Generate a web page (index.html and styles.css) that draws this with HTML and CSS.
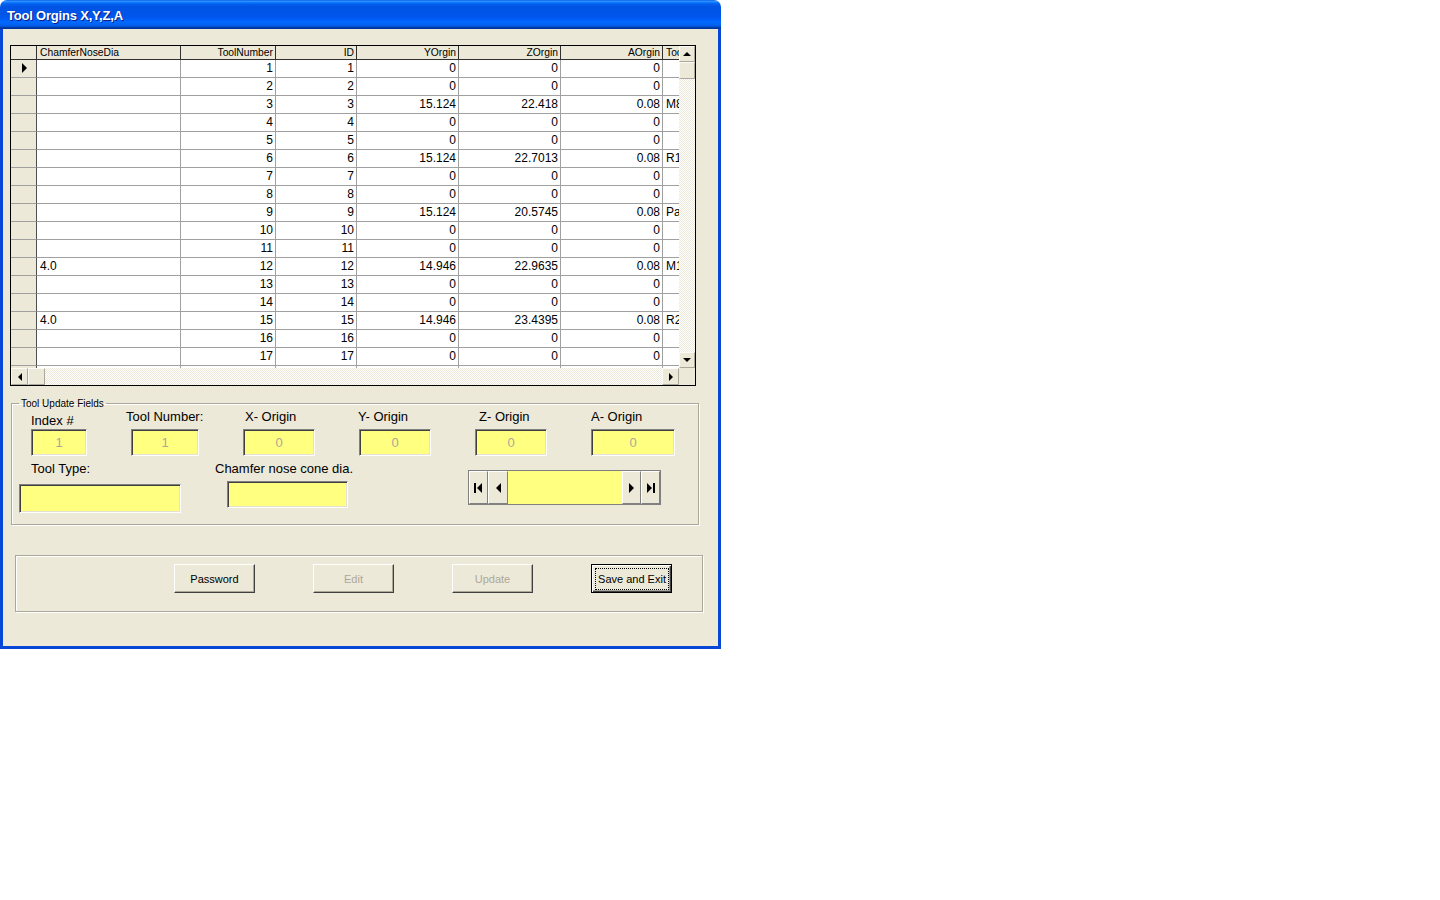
FILE: index.html
```html
<!doctype html>
<html lang="en-us">
  <head>
    <meta charset="utf-8">
    <title>Tool Orgins X,Y,Z,A</title>
    <link rel="stylesheet" href="styles.css">
  </head>
  <body>
	<div class="window">
		<div class="titlebar">Tool Orgins X,Y,Z,A</div>
		<div class="client">

			<div class="datagrid">
				<div class="cells">
					<div class="row head"><div class="rh"></div><div class="l">ChamferNoseDia</div><div>ToolNumber</div><div>ID</div><div>YOrgin</div><div>ZOrgin</div><div>AOrgin</div><div class="l">ToolType</div></div>
					<div class="row"><div class="rh"><span class="caret"></span></div><div class="l"></div><div>1</div><div>1</div><div>0</div><div>0</div><div>0</div><div class="l"></div></div>
					<div class="row"><div class="rh"></div><div class="l"></div><div>2</div><div>2</div><div>0</div><div>0</div><div>0</div><div class="l"></div></div>
					<div class="row"><div class="rh"></div><div class="l"></div><div>3</div><div>3</div><div>15.124</div><div>22.418</div><div>0.08</div><div class="l">M8 Tap</div></div>
					<div class="row"><div class="rh"></div><div class="l"></div><div>4</div><div>4</div><div>0</div><div>0</div><div>0</div><div class="l"></div></div>
					<div class="row"><div class="rh"></div><div class="l"></div><div>5</div><div>5</div><div>0</div><div>0</div><div>0</div><div class="l"></div></div>
					<div class="row"><div class="rh"></div><div class="l"></div><div>6</div><div>6</div><div>15.124</div><div>22.7013</div><div>0.08</div><div class="l">R1 Ream</div></div>
					<div class="row"><div class="rh"></div><div class="l"></div><div>7</div><div>7</div><div>0</div><div>0</div><div>0</div><div class="l"></div></div>
					<div class="row"><div class="rh"></div><div class="l"></div><div>8</div><div>8</div><div>0</div><div>0</div><div>0</div><div class="l"></div></div>
					<div class="row"><div class="rh"></div><div class="l"></div><div>9</div><div>9</div><div>15.124</div><div>20.5745</div><div>0.08</div><div class="l">Parting</div></div>
					<div class="row"><div class="rh"></div><div class="l"></div><div>10</div><div>10</div><div>0</div><div>0</div><div>0</div><div class="l"></div></div>
					<div class="row"><div class="rh"></div><div class="l"></div><div>11</div><div>11</div><div>0</div><div>0</div><div>0</div><div class="l"></div></div>
					<div class="row"><div class="rh"></div><div class="l">4.0</div><div>12</div><div>12</div><div>14.946</div><div>22.9635</div><div>0.08</div><div class="l">M10 Tap</div></div>
					<div class="row"><div class="rh"></div><div class="l"></div><div>13</div><div>13</div><div>0</div><div>0</div><div>0</div><div class="l"></div></div>
					<div class="row"><div class="rh"></div><div class="l"></div><div>14</div><div>14</div><div>0</div><div>0</div><div>0</div><div class="l"></div></div>
					<div class="row"><div class="rh"></div><div class="l">4.0</div><div>15</div><div>15</div><div>14.946</div><div>23.4395</div><div>0.08</div><div class="l">R2 Ream</div></div>
					<div class="row"><div class="rh"></div><div class="l"></div><div>16</div><div>16</div><div>0</div><div>0</div><div>0</div><div class="l"></div></div>
					<div class="row"><div class="rh"></div><div class="l"></div><div>17</div><div>17</div><div>0</div><div>0</div><div>0</div><div class="l"></div></div>
					<div class="row"><div class="rh"></div><div class="l"></div><div>18</div><div>18</div><div>0</div><div>0</div><div>0</div><div class="l"></div></div>
				</div>
				<div class="vscroll">
					<div class="sbtn"><span class="tri up"></span></div>
					<div class="thumb"></div>
					<div class="track"></div>
					<div class="sbtn"><span class="tri down"></span></div>
				</div>
				<div class="hscroll">
					<div class="sbtn"><span class="tri left"></span></div>
					<div class="thumb"></div>
					<div class="track"></div>
					<div class="sbtn"><span class="tri right"></span></div>
				</div>
				<div class="corner"></div>
			</div>

			<fieldset class="fields">
				<legend>Tool Update Fields</legend>
				<div class="frow">
					<div class="field w56">
						<label class="lbl low">Index #</label>
						<input class="tb" value="1" readonly>
					</div>
					<div class="field w68">
						<label class="lbl shift-n5">Tool Number:</label>
						<input class="tb" value="1" readonly>
					</div>
					<div class="field w72">
						<label class="lbl shift-2">X- Origin</label>
						<input class="tb" value="0" readonly>
					</div>
					<div class="field w72">
						<label class="lbl shift-n1">Y- Origin</label>
						<input class="tb" value="0" readonly>
					</div>
					<div class="field w72">
						<label class="lbl shift-4">Z- Origin</label>
						<input class="tb" value="0" readonly>
					</div>
					<div class="field w84">
						<label class="lbl">A- Origin</label>
						<input class="tb" value="0" readonly>
					</div>
				</div>
				<div class="frow second">
					<div class="field f-type">
						<label class="lbl">Tool Type:</label>
						<input class="tb" value="" readonly>
					</div>
					<div class="field f-chamfer">
						<label class="lbl">Chamfer nose cone dia.</label>
						<input class="tb" value="" readonly>
					</div>
					<div class="nav">
						<div class="navbtn">
							<svg width="9" height="10" viewBox="0 0 9 10"><rect x="0" y="0" width="2" height="10"/><path d="M8 0 L3 5 L8 10 Z"/></svg>
						</div>
						<div class="navbtn">
							<svg width="5" height="10" viewBox="0 0 5 10"><path d="M5 0 L0 5 L5 10 Z"/></svg>
						</div>
						<div class="navpos"></div>
						<div class="navbtn">
							<svg width="5" height="10" viewBox="0 0 5 10"><path d="M0 0 L5 5 L0 10 Z"/></svg>
						</div>
						<div class="navbtn">
							<svg width="9" height="10" viewBox="0 0 9 10"><path d="M1 0 L6 5 L1 10 Z"/><rect x="7" y="0" width="2" height="10"/></svg>
						</div>
					</div>
				</div>
			</fieldset>

			<div class="btnbox">
				<button class="btn">Password</button>
				<button class="btn" disabled>Edit</button>
				<button class="btn" disabled>Update</button>
				<button class="btn default"><span class="focus">Save and Exit</span></button>
			</div>

		</div>
	</div>
  </body>
</html>
```

FILE: styles.css
```css
body
{
	margin: 0;
	background: #fff;
	font-family: "Liberation Sans", Arial, sans-serif;
}

/* window frame */

.window
{
	width: 721px;
	height: 649px;
	display: flex;
	flex-direction: column;
	border-radius: 7px 7px 0 0;
	overflow: hidden;
}

.titlebar
{
	flex: none;
	height: 29px;
	box-sizing: border-box;
	padding: 3px 0 0 7px;
	line-height: 26px;
	color: #fff;
	font-size: 13px;
	font-weight: bold;
	letter-spacing: -0.2px;
	text-shadow: 1px 1px #0a1e8c;
	background: linear-gradient(to bottom, #0058ee 0%, #3593ff 4%, #288eff 6%, #127dff 8%, #036ffc 10%, #0262ee 14%, #0057e5 20%, #0054e3 24%, #0055eb 56%, #005bf5 66%, #026afe 76%, #0062ef 86%, #0052d6 92%, #0040ab 94%, #003092 100%);
}

.client
{
	flex: 1;
	background: #ece9d8;
	border: 3px solid #0846d8;
	border-top: 0;
	padding-top: 16px;
}

/* data grid */

.datagrid
{
	margin-left: 7px;
	width: 686px;
	height: 341px;
	box-sizing: border-box;
	border: 1px solid #000;
	display: grid;
	grid-template-columns: 668px 16px;
	grid-template-rows: 322px 17px;
	font-size: 12px;
}

.cells
{
	overflow: hidden;
	background: #fff;
}

.row
{
	display: grid;
	grid-template-columns: 26px 144px 95px 81px 102px 102px 102px 60px;
	height: 18px;
}

.row > div
{
	box-sizing: border-box;
	border-right: 1px solid #a0a0a0;
	border-bottom: 1px solid #a0a0a0;
	padding: 0 2px;
	line-height: 17px;
	text-align: right;
	white-space: nowrap;
	overflow: hidden;
}

.row > .l
{
	text-align: left;
	padding-left: 3px;
}

.row > .rh
{
	background: #ece9d8;
	border-right-color: #505050;
	padding: 0;
}

.row.head
{
	height: 14px;
	background: #ece9d8;
	font-size: 10.3px;
}

.row.head > div
{
	line-height: 13px;
	border-color: #303030;
}

.caret
{
	display: block;
	width: 0;
	height: 0;
	margin: 3px 0 0 11px;
	border-left: 5px solid #000;
	border-top: 5px solid transparent;
	border-bottom: 5px solid transparent;
}

/* scrollbars */

.vscroll,
.hscroll
{
	display: flex;
	background-color: #fff;
	background-image: repeating-conic-gradient(#ece9d8 0 25%, #fff 0 50%);
	background-size: 2px 2px;
}

.vscroll
{
	flex-direction: column;
}

.sbtn,
.thumb
{
	flex: none;
	box-sizing: border-box;
	background: #ece9d8;
	border: 1px solid;
	border-color: #fbfaf6 #aca899 #aca899 #fbfaf6;
}

.sbtn
{
	display: flex;
	align-items: center;
	justify-content: center;
}

.vscroll .sbtn
{
	height: 16px;
}

.vscroll .thumb
{
	height: 17px;
}

.hscroll .sbtn,
.hscroll .thumb
{
	width: 17px;
}

.track
{
	flex: 1;
}

.corner
{
	background: #ece9d8;
}

.tri
{
	width: 0;
	height: 0;
}

.tri.up
{
	border-left: 4px solid transparent;
	border-right: 4px solid transparent;
	border-bottom: 4px solid #000;
}

.tri.down
{
	border-left: 4px solid transparent;
	border-right: 4px solid transparent;
	border-top: 4px solid #000;
}

.tri.left
{
	border-top: 4px solid transparent;
	border-bottom: 4px solid transparent;
	border-right: 4px solid #000;
}

.tri.right
{
	border-top: 4px solid transparent;
	border-bottom: 4px solid transparent;
	border-left: 4px solid #000;
}

/* update fields */

.fields
{
	margin: 12px 0 0 8px;
	width: 688px;
	box-sizing: border-box;
	padding: 0 0 11px 0;
	border: 1px solid #aca899;
	box-shadow: inset 1px 1px #fff, 1px 1px #fff;
	min-inline-size: 0;
}

.fields legend
{
	margin-left: 7px;
	padding: 0 2px;
	font-size: 10px;
	line-height: 11px;
}

.frow
{
	display: flex;
	align-items: flex-start;
	padding-left: 19px;
}

.frow .field + .field
{
	margin-left: 44px;
}

.frow.second
{
	margin-top: 5px;
	padding-left: 0;
}

.field
{
	display: flex;
	flex-direction: column;
	align-items: flex-start;
}

.w56 { width: 56px; }
.w68 { width: 68px; }
.w72 { width: 72px; }
.w84 { width: 84px; }

.lbl
{
	display: block;
	font-size: 13px;
	line-height: 16px;
	white-space: nowrap;
	margin-bottom: 4px;
}

.lbl.low
{
	margin-top: 4px;
	margin-bottom: 0;
}

.shift-n5 { margin-left: -5px; }
.shift-n1 { margin-left: -1px; }
.shift-2 { margin-left: 2px; }
.shift-4 { margin-left: 4px; }

.tb
{
	width: 100%;
	height: 27px;
	box-sizing: border-box;
	margin: 0;
	padding: 0;
	border: 1px solid;
	border-color: #808080 #fff #fff #808080;
	box-shadow: inset 1px 1px #404040, inset -1px -1px #e4e1d2;
	background: #ffff80;
	color: #aca899;
	font-family: "Liberation Sans", Arial, sans-serif;
	font-size: 13px;
	text-align: center;
	outline: none;
}

.f-type
{
	margin-left: 7px;
	width: 162px;
}

.f-type .lbl
{
	margin-left: 12px;
	margin-bottom: 7px;
}

.f-type .tb
{
	height: 29px;
}

.frow.second .f-chamfer
{
	margin-left: 34px;
	width: 141px;
}

.f-chamfer .tb
{
	width: 121px;
	margin-left: 12px;
}

.nav
{
	display: flex;
	width: 193px;
	height: 35px;
	box-sizing: border-box;
	margin: 9px 0 0 112px;
	border: 1px solid #808080;
}

.navbtn
{
	flex: none;
	width: 19px;
	box-sizing: border-box;
	display: flex;
	align-items: center;
	justify-content: center;
	background: #ece9d8;
	border: 1px solid;
	border-color: #fff #808080 #808080 #fff;
}

.navbtn:nth-child(2)
{
	width: 20px;
}

.navpos
{
	flex: 1;
	background: #ffff80;
}

/* buttons */

.btnbox
{
	display: flex;
	margin: 30px 0 0 12px;
	width: 688px;
	height: 57px;
	box-sizing: border-box;
	padding: 8px 0 0 158px;
	border: 1px solid #aca899;
	box-shadow: inset 1px 1px #fff, 1px 1px #fff;
}

.btn
{
	flex: none;
	width: 81px;
	height: 29px;
	margin-right: 58px;
	padding: 0;
	background: #ece9d8;
	border: 1px solid;
	border-color: #fff #404040 #404040 #fff;
	box-shadow: inset -1px -1px #aca899;
	color: #000;
	font-family: "Liberation Sans", Arial, sans-serif;
	font-size: 11px;
	white-space: nowrap;
}

.btn:last-child
{
	margin-right: 0;
}

.btn:disabled
{
	color: #aca899;
}

.btn.default
{
	border-color: #000;
	box-shadow: inset 1px 1px #fff, inset -1px -1px #404040, inset -2px -2px #aca899;
}

.focus
{
	display: block;
	height: 22px;
	margin: 0 2px 0 3px;
	box-sizing: border-box;
	border: 1px dotted #000;
	line-height: 20px;
}
```
